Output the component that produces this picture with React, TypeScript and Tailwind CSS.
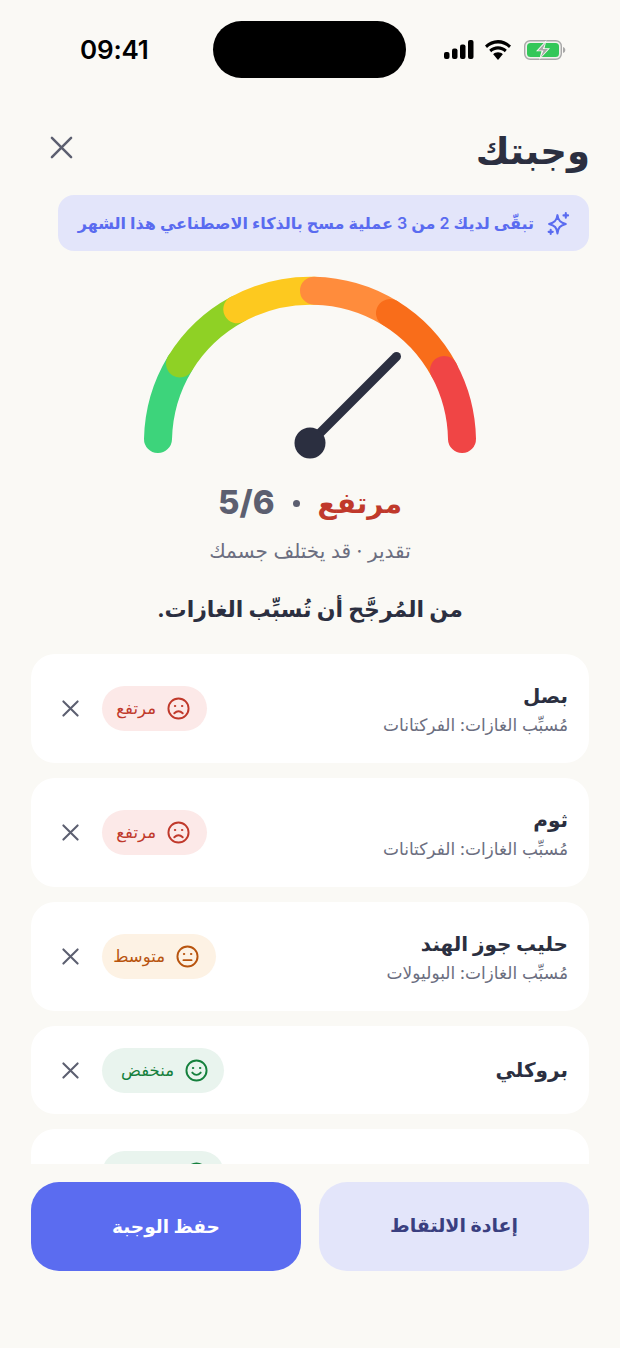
import React from "react";

const FONT = "font-['Inter','DejaVu_Sans',sans-serif]";

function Arc({ from, to, color }: { from: [number, number]; to: [number, number]; color: string }) {
  return (
    <path
      d={`M${from[0]} ${from[1]} A152.4 152.4 0 0 1 ${to[0]} ${to[1]}`}
      fill="none"
      stroke={color}
      strokeWidth={28}
      strokeLinecap="round"
    />
  );
}

function Gauge() {
  const p: [number, number][] = [
    [158, 439],
    [180, 363.5],
    [237.3, 309.3],
    [314, 290.7],
    [390, 313],
    [444, 370],
    [462, 439],
  ];
  const c = ["#3dd47b", "#8fd125", "#fdc91f", "#ff8c3c", "#f96d1a", "#f04545"];
  return (
    <svg width="340" height="190" viewBox="140 272 340 190" className="block">
      {c.map((color, i) => (
        <Arc key={color} from={p[i]} to={p[i + 1]} color={color} />
      ))}
      <line x1="310" y1="443" x2="396.5" y2="356.5" stroke="#2b2f40" strokeWidth="9" strokeLinecap="round" />
      <circle cx="310" cy="443" r="15.5" fill="#2b2f40" />
    </svg>
  );
}

function X({ size, width }: { size: number; width: number }) {
  return (
    <svg width={size} height={size} viewBox="0 0 24 24" fill="none" stroke="#5c5f70" strokeWidth={width} strokeLinecap="round">
      <path d="M2 2 L22 22 M22 2 L2 22" />
    </svg>
  );
}

function Face({ kind, color }: { kind: "sad" | "neutral" | "happy"; color: string }) {
  return (
    <svg width="23" height="23" viewBox="0 0 24 24" fill="none" stroke={color} strokeWidth="2" strokeLinecap="round">
      <circle cx="12" cy="12" r="10.5" />
      <circle cx="8.3" cy="9.4" r="0.7" fill={color} strokeWidth="1" />
      <circle cx="15.7" cy="9.4" r="0.7" fill={color} strokeWidth="1" />
      {kind === "sad" && <path d="M7.6 17 Q12 12.6 16.4 17" />}
      {kind === "neutral" && <path d="M7.8 15.8 H16.2" />}
      {kind === "happy" && <path d="M7.6 14.2 Q12 19 16.4 14.2" />}
    </svg>
  );
}

type Level = "high" | "mid" | "low";

function Badge({ level }: { level: Level }) {
  if (level === "high")
    return (
      <div className="flex items-center h-[45px] w-[105px] rounded-full bg-[#fce9e8] pr-[17px] gap-[11px] text-[#c0392b]">
        <Face kind="sad" color="#c0392b" />
        <span className="text-[16.5px] font-normal">مرتفع</span>
      </div>
    );
  if (level === "mid")
    return (
      <div className="flex items-center h-[45px] w-[114px] rounded-full bg-[#fdf2e4] pr-[17px] gap-[11px] text-[#b8540e]">
        <Face kind="neutral" color="#b8540e" />
        <span className="text-[16.5px] font-normal">متوسط</span>
      </div>
    );
  return (
    <div className="flex items-center h-[45px] w-[122px] rounded-full bg-[#e9f4ee] pr-[16px] gap-[11px] text-[#15803d]">
      <Face kind="happy" color="#15803d" />
      <span className="text-[16.5px] font-normal">منخفض</span>
    </div>
  );
}

function Card({ name, sub, level, h }: { name: string; sub?: string; level: Level; h: string }) {
  return (
    <div className={`flex items-center justify-between bg-white rounded-[24px] pr-[21px] pl-[31px] shrink-0 ${h}`}>
      <div className="flex flex-col gap-[4px]">
        <div className="text-[20px] leading-[28px] font-bold text-[#2b2f40]">{name}</div>
        {sub && <div className="text-[17px] leading-[22px] text-[#6b6e80]">{sub}</div>}
      </div>
      <div className="flex items-center gap-[23px]">
        <Badge level={level} />
        <X size={17} width={2.9} />
      </div>
    </div>
  );
}

export default function App() {
  return (
    <div className={`w-[620px] h-[1348px] bg-[#faf9f5] overflow-hidden flex flex-col ${FONT}`}>
      <div dir="ltr" className="flex items-center justify-between h-[57px] mt-[21px] pl-[80px] pr-[54px]">
        <span className="text-[26px] font-semibold text-black tracking-[-0.2px] w-[133px] font-['Inter',sans-serif]">09:41</span>
        <div className="w-[194px] h-[57px] bg-black rounded-full" />
        <div className="flex items-center gap-[11px] ml-[38px]">
          <svg width="30" height="19" viewBox="0 0 30 19" fill="black">
            <rect x="0" y="12" width="5.5" height="7" rx="2" />
            <rect x="8" y="8.5" width="5.5" height="10.5" rx="2" />
            <rect x="16" y="4.5" width="5.5" height="14.5" rx="2" />
            <rect x="24" y="0" width="5.5" height="19" rx="2" />
          </svg>
          <svg width="26" height="20" viewBox="0 0 26 20">
            <path d="M13 3.6 C17.3 3.6 21.1 5.3 24 8 L26 5.6 C22.5 2.2 18 0 13 0 C8 0 3.5 2.2 0 5.6 L2 8 C4.9 5.3 8.7 3.6 13 3.6 Z" fill="black" />
            <path d="M13 9.5 C15.6 9.5 18 10.5 19.8 12.2 L21.8 9.8 C19.4 7.6 16.3 6.2 13 6.2 C9.7 6.2 6.6 7.6 4.2 9.8 L6.2 12.2 C8 10.5 10.4 9.5 13 9.5 Z" fill="black" />
            <path d="M13 12.3 C11.1 12.3 9.4 13 8.2 14.2 L13 20 L17.8 14.2 C16.6 13 14.9 12.3 13 12.3 Z" fill="black" />
          </svg>
          <svg width="42" height="20" viewBox="0 0 42 20" className="ml-[2px]">
            <rect x="0.7" y="0.7" width="36.6" height="18.6" rx="5.5" fill="#f2f2ee" stroke="#a8a8a8" strokeWidth="1.4" />
            <rect x="3" y="3" width="32" height="14" rx="3.5" fill="#34c759" />
            <path d="M39 7 C40.5 7.5 41.3 8.5 41.3 10 C41.3 11.5 40.5 12.5 39 13 Z" fill="#a8a8a8" />
            <path d="M22.5 0 L12 11.3 H17.5 L15 20 L26 8.2 H20.5 Z" fill="#faf9f5" />
            <path d="M21.5 2.5 L14 10.5 H19.5 L16.5 17.5 L24 9 H18.8 Z" fill="#a8a8a8" />
          </svg>
        </div>
      </div>

      <div dir="rtl" className="flex items-center justify-between h-[60px] mt-[43px] pr-[30px] pl-[50px] shrink-0">
        <h1 className="text-[37px] font-bold text-[#2b2f40] leading-[60px]">وجبتك</h1>
        <div className="-translate-y-[4px]">
          <X size={23} width={2.6} />
        </div>
      </div>

      <div dir="rtl" className="flex items-center mt-[14px] mr-[31px] ml-[58px] h-[56px] shrink-0 rounded-[16px] bg-[#e3e5fa] pr-[18px] gap-[12px] text-[#5a6bf0]">
        <svg width="25" height="25" viewBox="0 0 24 24" fill="none" stroke="#5a6bf0" strokeWidth="2" strokeLinejoin="round" strokeLinecap="round" className="shrink-0">
          <path d="M11 4 C11.6 9 13.6 11.2 19 12.5 C13.6 13.8 11.6 16 11 21.5 C10.4 16 8.4 13.8 3 12.5 C8.4 11.2 10.4 9 11 4 Z" />
          <path d="M19 2 V6.5 M16.8 4.2 H21.2" />
          <path d="M4.5 18 V22 M2.5 20 H6.5" />
        </svg>
        <span className="text-[16px] font-semibold whitespace-nowrap">تبقّى لديك 2 من 3 عملية مسح بالذكاء الاصطناعي هذا الشهر</span>
      </div>

      <div className="flex justify-center mt-[21px] shrink-0">
        <Gauge />
      </div>

      <div dir="rtl" className="flex items-center justify-center gap-[18px] h-[50px] mt-[16px] font-bold shrink-0">
        <span className="text-[#c0392b] text-[28px]">مرتفع</span>
        <span className="w-[7px] h-[7px] rounded-full bg-[#5c5f70]" />
        <span dir="ltr" className="text-[#5c5f70] text-[33px] font-extrabold">5/6</span>
      </div>

      <div dir="rtl" className="text-center text-[20px] leading-[26px] text-[#6b6e80] mt-[10px] shrink-0">تقدير · قد يختلف جسمك</div>

      <div dir="rtl" className="text-center text-[22px] leading-[34px] font-bold text-[#2b2f40] mt-[28px] shrink-0">من المُرجَّح أن تُسبِّب الغازات.</div>

      <div dir="rtl" className="flex flex-col gap-[15px] mt-[28px] mx-[31px] h-[510px] overflow-hidden shrink-0">
        <Card name="بصل" sub="مُسبِّب الغازات: الفركتانات" level="high" h="h-[109px]" />
        <Card name="ثوم" sub="مُسبِّب الغازات: الفركتانات" level="high" h="h-[109px]" />
        <Card name="حليب جوز الهند" sub="مُسبِّب الغازات: البوليولات" level="mid" h="h-[109px]" />
        <Card name="بروكلي" level="low" h="h-[88px]" />
        <Card name="سبانخ" level="low" h="h-[88px]" />
      </div>

      <div dir="rtl" className="grid grid-cols-2 gap-[18px] mx-[31px] mt-[18px] shrink-0">
        <button className="h-[89px] rounded-[28px] bg-[#e3e5fa] text-[#3a3f80] text-[19px] font-bold">إعادة الالتقاط</button>
        <button className="h-[89px] rounded-[28px] bg-[#5b6cf0] text-white text-[18.5px] font-bold">حفظ الوجبة</button>
      </div>
    </div>
  );
}
